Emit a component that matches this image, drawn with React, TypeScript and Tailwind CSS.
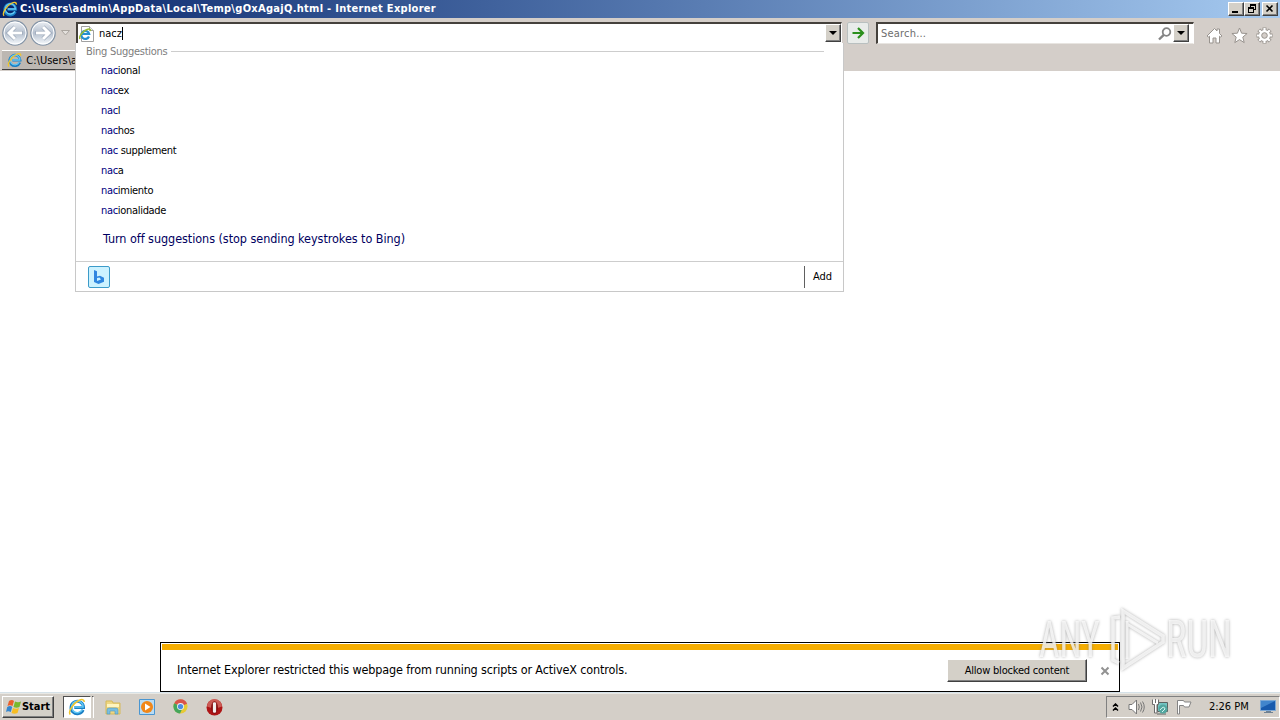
import type { ReactNode } from "react";

const suggestions = ["ional", "ex", "l", "hos", " supplement", "a", "imiento", "ionalidade"];

function IeLogo({ className }: { className: string }) {
  return (
    <svg viewBox="0 0 20 20" className={className}>
      <path d="M16.800 13.200A7 7 0 1 1 17.300 10.500H7" fill="none" stroke="#1b7fc4" strokeWidth="3.200" />
      <path d="M16 13A6.400 6.400 0 1 1 16.800 10H7" fill="none" stroke="#63c8f5" strokeWidth="1.700" />
      <path d="M2.600 18.400C-.4 15.500 5.500 6 12 2.800c3.400-1.700 6.200-1.400 6 1.700" fill="none" stroke="#f0c52b" strokeWidth="1.700" />
    </svg>
  );
}

function Caret({ className }: { className: string }) {
  return (
    <svg viewBox="0 0 8 4" className={className}>
      <path d="M0 0h8L4 4z" fill="currentColor" />
    </svg>
  );
}

function Bevel({ className, children }: { className: string; children: ReactNode }) {
  return (
    <div className={`flex items-center justify-center border border-t-white border-l-white border-r-[#404040] border-b-[#404040] bg-[#d4d0c8] shadow-[inset_-1px_-1px_#808080] ${className}`}>
      {children}
    </div>
  );
}

function NavButton({ flip }: { flip?: boolean }) {
  return (
    <svg viewBox="0 0 26 26" className={`h-[26px] w-[26px] ${flip ? "-scale-x-100" : ""}`}>
      <defs>
        <linearGradient id="disc" x2="0" y2="1">
          <stop stopColor="#eef1f5" />
          <stop offset=".5" stopColor="#b4bfce" />
          <stop offset="1" stopColor="#fafdff" />
        </linearGradient>
      </defs>
      <circle cx="13" cy="13" r="12.200" fill="url(#disc)" stroke="#8494a6" strokeWidth="1.200" />
      <circle cx="13" cy="13" r="11" fill="none" stroke="#fff" strokeWidth="1" />
      <path d="M20.500 13H7.500M13 7l-6 6 6 6" fill="none" stroke="#93a0b2" strokeWidth="4.200" />
      <path d="M20 13H7.500M13 7l-6 6 6 6" fill="none" stroke="#fff" strokeWidth="3" />
    </svg>
  );
}

function TitleBar() {
  return (
    <header className="flex h-[18px] items-center bg-linear-to-r from-[#0a246a] to-[#a6caf0] pr-[2px] pl-[2px]">
      <IeLogo className="h-4 w-4" />
      <span className="ml-[2px] pt-px text-[11px] font-bold tracking-[0.29px] text-white">
        C:\Users\admin\AppData\Local\Temp\gOxAgajQ.html - Internet Explorer
      </span>
      <div className="ml-auto flex">
        <Bevel className="h-[14px] w-4">
          <svg viewBox="0 0 12 10" className="h-[10px] w-3"><path d="M2 7h6v2H2z" /></svg>
        </Bevel>
        <Bevel className="h-[14px] w-4">
          <svg viewBox="0 0 12 10" className="h-[10px] w-3" shapeRendering="crispEdges">
            <path d="M4 0h6v6H8V5h1V2H5v1H4zM2 3h6v6H2zM3 5v3h4V5z" fillRule="evenodd" />
          </svg>
        </Bevel>
        <Bevel className="ml-[2px] h-[14px] w-4">
          <svg viewBox="0 0 12 10" className="h-[10px] w-3"><path d="M2.500 1.500l6 6m0-6l-6 6" stroke="#000" strokeWidth="1.600" /></svg>
        </Bevel>
      </div>
    </header>
  );
}

function Toolbar() {
  return (
    <div className="flex h-[27px] items-start">
      <div className="flex w-[76px] items-center pt-[2px] pl-[2px]">
        <NavButton />
        <div className="ml-[2px]"><NavButton flip /></div>
        <svg viewBox="0 0 9 6" className="ml-[5px] h-[6px] w-[9px]"><path d="M.5.5h8l-4 4.500z" fill="#e4e1dd" stroke="#aaa59f" /></svg>
      </div>
      <div className="mt-1 flex h-[21px] w-[766px] items-center border-t-2 border-r border-l-2 border-t-[#45413c] border-r-white border-l-[#45413c] bg-white">
        <svg viewBox="0 0 16 16" className="ml-px h-4 w-4">
          <path d="M2.500.5h8l4 4v11h-12z" fill="#fff" stroke="#a0a0a0" />
          <path d="M10.500.5v4h4" fill="#eee" stroke="#a0a0a0" />
          <path d="M10 10.500A4 4 0 1 1 10.200 8H3" fill="none" stroke="#258fd0" strokeWidth="2.200" />
          <path d="M1 13C-.5 10 4 5 8 3.500c2-.8 4-.5 3.300 1.500" fill="none" stroke="#9bbb32" strokeWidth="1.500" />
        </svg>
        <span className="ml-1 pt-[2px] text-[11px] tracking-[-0.05px]">nacz</span>
        <i className="h-[13px] w-px bg-black" />
        <Bevel className="mb-px ml-auto h-[18px] w-4"><Caret className="h-1 w-2" /></Bevel>
      </div>
      <div className="mt-[4px] ml-[5px] flex h-[22px] w-[22px] items-center justify-center rounded-[2px] border border-[#b9c0c0] bg-[#e9ecea]">
        <svg viewBox="0 0 14 12" className="h-3 w-[14px]"><path d="M1.500 6H12M7 1l5 5-5 5" fill="none" stroke="#2b8f1c" strokeWidth="2.200" /></svg>
      </div>
      <div className="mt-1 ml-[7px] flex h-[22px] w-[318px] items-center border-t-2 border-r border-b border-l-2 border-t-[#45413c] border-r-white border-b-[#e8e5e1] border-l-[#45413c] bg-white">
        <span className="ml-[3px] pt-[2px] text-[11px] tracking-[0.2px] text-[#6d6d6d]">Search...</span>
        <svg viewBox="0 0 14 14" className="ml-auto h-[14px] w-[14px]">
          <circle cx="8.500" cy="5" r="3.800" fill="none" stroke="#858585" strokeWidth="1.800" />
          <path d="M5.800 7.800L1 12.500" stroke="#858585" strokeWidth="2.400" />
        </svg>
        <Bevel className="mr-[4px] mb-px ml-px h-[18px] w-4"><Caret className="h-1 w-2" /></Bevel>
      </div>
      <div className="mt-[9px] ml-[12px] flex gap-[8px] text-white">
        <svg viewBox="0 0 17 17" className="h-[17px] w-[17px]">
          <path d="M1 9l7.500-7.500L11 4V2h2.500v4.500L16 9l-1.500 1-1-.8V16H10v-5H7v5H3.500V9.200l-1 .8z" fill="#fff" stroke="#98938e" />
        </svg>
        <svg viewBox="0 0 17 17" className="h-[17px] w-[17px]">
          <path d="M8.500 1l2.100 5.200 5.500.3-4.300 3.600 1.400 5.500-4.700-3-4.700 3 1.400-5.500L.9 6.500l5.500-.3z" fill="#fff" stroke="#98938e" />
        </svg>
        <svg viewBox="0 0 17 17" className="h-[17px] w-[17px]">
          <g stroke="#98938e" strokeWidth="4"><path d="M8.500.5v16M.5 8.500h16M2.800 2.800l11.400 11.400M14.200 2.800L2.800 14.200" /></g>
          <circle cx="8.500" cy="8.500" r="6.300" fill="#98938e" />
          <g stroke="#fff" strokeWidth="2.200"><path d="M8.500 1v15M1 8.500h15M3.200 3.200l10.600 10.600M13.800 3.200L3.200 13.800" /></g>
          <circle cx="8.500" cy="8.500" r="5.500" fill="#fff" />
          <circle cx="8.500" cy="8.500" r="2.800" fill="#d4cec9" stroke="#98938e" />
        </svg>
      </div>
    </div>
  );
}

function SuggestionMenu() {
  return (
    <div className="absolute top-[43px] left-[75px] h-[249px] w-[769px] border border-t-0 border-[#c8c8c8] bg-white">
      <div className="flex h-[17px] items-center pl-[10px] text-[11px] text-[#7d7d7d]">
        <span className="pt-px tracking-[-0.27px]">Bing Suggestions</span>
        <i className="mr-[19px] ml-1 h-px flex-1 bg-[#cdcdcd]" />
      </div>
      <ul className="pt-px pl-[25px] text-[11px] leading-5 tracking-[-0.31px]">
        {suggestions.map((rest) => (
          <li key={rest} className="h-5 whitespace-pre"><span className="text-[#000080]">nac</span>{rest}</li>
        ))}
      </ul>
      <p className="mt-[8px] h-[32px] pl-[27px] text-[12.5px] leading-5 tracking-[-0.05px] text-[#000060]">
        Turn off suggestions (stop sending keystrokes to Bing)
      </p>
      <div className="flex h-[30px] items-center border-t border-[#cdcdcd] pl-[12px]">
        <div className="flex h-[22px] w-[22px] items-center justify-center rounded-[2px] border border-[#3c9bc9] bg-[#ccf2ff]">
          <svg viewBox="0 0 12 16" className="h-4 w-3">
            <path d="M1 1l3 1.200v5.300l3-.8 4 2v4L5.500 15 1 13z" fill="#2f86e0" />
            <path d="M4 9l2.500-.5L8 10.500 4 12z" fill="#ccf2ff" />
          </svg>
        </div>
        <div className="ml-auto flex h-[22px] w-[39px] items-center border-l border-[#606060] pt-[2px] pl-2 text-[11px]">Add</div>
      </div>
    </div>
  );
}

function NotificationBar() {
  return (
    <div className="mx-auto h-[50px] w-[960px] border border-black bg-white p-px">
      <div className="h-[6px] bg-[#f5ad00]" />
      <div className="flex h-[40px] items-center pl-[15px]">
        <span className="text-[12.5px] tracking-[-0.14px]">
          Internet Explorer restricted this webpage from running scripts or ActiveX controls.
        </span>
        <Bevel className="mt-px ml-auto h-[23px] w-[140px]"><span className="pt-px text-[11px] tracking-[-0.2px]">Allow blocked content</span></Bevel>
        <svg viewBox="0 0 10 10" className="mt-[2px] mr-[8px] ml-[13px] h-[10px] w-[10px]">
          <path d="M1.500 1.500l7 7M8.500 1.500l-7 7" stroke="#929292" strokeWidth="2" />
        </svg>
      </div>
    </div>
  );
}

function Watermark() {
  return (
    <div className="absolute top-[606px] left-[1036px] flex h-[68px] items-center text-white/75 drop-shadow-[0_0_1.5px_#777c]">
      <svg viewBox="0 0 200 68" className="h-[68px] w-[200px]" fill="none" stroke="currentColor" strokeWidth="3.500">
        <path d="M84 11l-7 1v42l6 3" />
        <path d="M87 5l40 25v6L87 62z" />
        <path d="M91 18l31 19M91 15v38" strokeWidth="3" />
      </svg>
      <span className="absolute top-[9px] left-[3px] origin-left scale-x-[0.71] font-['Roboto'] text-[50px] leading-[50px] font-normal tracking-[0px]">ANY</span>
      <span className="absolute top-[9px] left-[130px] origin-left scale-x-[0.74] font-['Roboto'] text-[52px] leading-[50px] font-normal tracking-[0px]">RUN</span>
    </div>
  );
}

function Taskbar() {
  return (
    <footer className="flex h-[28px] items-start border-t border-[#d5e1e8] bg-[#d4cfc8] pt-[3px] shadow-[inset_0_1px_#e8e8e4]">
      <Bevel className="ml-[2px] h-[22px] w-[52px] shrink-0">
        <svg viewBox="0 0 16 16" className="h-4 w-4">
          <path d="M3 2q3-2 5 0L6.500 7Q4 5.500 1.500 7z" fill="#ea5f2b" />
          <path d="M9 2.500q3 1.500 6 0L13.500 8q-3 1.500-6 0z" fill="#79b82c" />
          <path d="M1.200 8q3-1.800 5 0L4.800 13Q2 11.500 0 13z" fill="#3586cf" />
          <path d="M7 9q3 1.500 6 0l-1.500 5q-3 1.500-6 0z" fill="#f7bd23" />
        </svg>
        <span className="pt-px text-[11px] font-bold">Start</span>
      </Bevel>
      <div className="ml-[9px] flex h-[22px] w-[28px] items-center justify-center border-t border-r border-b border-l border-t-[#505050] border-r-white border-b-white border-l-[#505050] bg-white">
        <IeLogo className="h-[18px] w-[18px]" />
      </div>
      <i className="ml-px h-[22px] w-[2px] border-t border-r border-t-[#505050] border-r-white" />
      <svg viewBox="0 0 18 18" className="mt-[2px] ml-[10px] h-[18px] w-[18px]">
        <path d="M2 3h6l1 2h7v11H2z" fill="#eed682" stroke="#d5b959" />
        <path d="M3 6h12v3H3z" fill="#fff5bf" />
        <path d="M3 16v-4q0-2 2-2h7q2 0 2 2v4h-3v-3H6v3z" fill="#79bedf" stroke="#4d97bf" strokeWidth=".6" />
      </svg>
      <svg viewBox="0 0 16 16" className="mt-[3px] ml-[17px] h-4 w-4">
        <path d="M.5.5h15v15H.5z" fill="#b9dcf4" stroke="#4a96d1" />
        <circle cx="8" cy="8" r="6" fill="#f18719" />
        <path d="M6 4.500L11.500 8 6 11.500z" fill="#fff" />
      </svg>
      <svg viewBox="0 0 16 16" className="mt-[3px] ml-[18px] h-[15px] w-[15px]">
        <circle cx="8" cy="8" r="7.500" fill="#e7ca34" />
        <path d="M8 8L1.300 4.500A7.500 7.500 0 0 1 15 5z" fill="#d9534a" />
        <path d="M8 8L1.300 4.500A7.500 7.500 0 0 0 7.500 15.500L10 10z" fill="#45a65b" />
        <circle cx="8" cy="8" r="3.700" fill="#f0f4f8" /><circle cx="8" cy="8" r="2.800" fill="#4d8de0" />
      </svg>
      <svg viewBox="0 0 16 16" className="mt-[3px] ml-[18px] h-[17px] w-[17px]">
        <circle cx="8" cy="8" r="7.500" fill="#ae1516" />
        <path d="M1 7a7 7 0 0 1 14 0q-7 3-14 0z" fill="#cc5b55" />
        <ellipse cx="8" cy="8" rx="3.200" ry="6" fill="#850d0f" />
        <rect x="6.500" y="3" width="3" height="10" rx="1.300" fill="#f2eeee" />
      </svg>
      <div className="ml-auto flex h-[22px] w-[174px] items-center border-t border-r border-b border-l border-t-[#808080] border-r-white border-b-white border-l-[#808080] pl-[5px]">
        <svg viewBox="0 0 7 8" className="h-2 w-[7px]"><path d="M1 3.500L3.500 1 6 3.500M1 7.500L3.500 5 6 7.500" fill="none" stroke="#000" strokeWidth="1.500" /></svg>
        <svg viewBox="0 0 17 16" className="ml-[9px] h-4 w-[17px]" fill="none" stroke="#777">
          <path d="M1 5.500h3L8.500 1v14L4 10.500H1z" fill="#fff" /><path d="M10.500 5q1.500 3 0 6M12.500 3.500q3 4.500 0 9M14.500 2.500q3.500 5.500 0 11" />
        </svg>
        <svg viewBox="0 0 17 16" className="ml-[7px] h-4 w-[17px]">
          <path d="M5.500 3.500h10v9h-10zM5 15h9" fill="#73c4c2" stroke="#5c6261" />
          <circle cx="11" cy="10" r="4.500" fill="#53a7a0" /><path d="M8 11q4-5 5-1l-3 3" stroke="#d7f5f0" fill="none" />
          <path d="M.5.500v5h2V14H5V5.500h1.500V.5M3.500 0v4" fill="#fff" stroke="#6c6c6c" />
        </svg>
        <svg viewBox="0 0 16 16" className="ml-[7px] h-4 w-4">
          <path d="M2 1.500h5.500l1 1.500h6.500l-2 5H8.500l-1-1.500H3.500V15H1.500V1.500z" fill="#fff" stroke="#858585" />
        </svg>
        <span className="ml-[17px] pt-px text-[11px] tracking-[-0.03px]">2:26 PM</span>
        <svg viewBox="0 0 16 14" className="mr-[3px] ml-auto h-[14px] w-4">
          <path d="M.5.5h15v10H.5z" fill="#195aad" stroke="#7da8d5" /><path d="M1 1h14L1 8z" fill="#4285cc" />
          <path d="M6 11h5v1h2v1H4v-1h2z" fill="#6f8294" />
        </svg>
      </div>
    </footer>
  );
}

export default function App() {
  return (
    <div className="relative flex h-[720px] w-[1280px] flex-col overflow-hidden bg-white font-['DejaVu_Sans_Condensed','DejaVu_Sans',sans-serif] whitespace-nowrap text-black [font-stretch:condensed]">
      <TitleBar />
      <div className="h-[53px] bg-[#d4cec9]">
        <Toolbar />
        <div className="mt-[5px] ml-[2px] flex h-[20px] w-[100px] items-center border-t border-b border-t-white border-b-[#404040] bg-[#bcb7b2] pl-[5px]">
          <IeLogo className="h-4 w-4" />
          <span className="ml-1 pt-[2px] text-[11px]">C:\Users\admin</span>
        </div>
      </div>
      <main className="flex-1" />
      <NotificationBar />
      <Taskbar />
      <SuggestionMenu />
      <Watermark />
    </div>
  );
}
